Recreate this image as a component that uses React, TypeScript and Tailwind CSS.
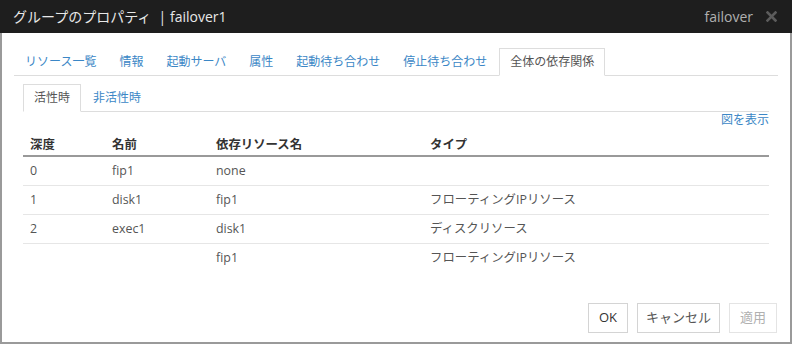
import React from 'react';

const mainTabs = ['リソース一覧', '情報', '起動サーバ', '属性', '起動待ち合わせ', '停止待ち合わせ', '全体の依存関係'];
const subTabs = ['活性時', '非活性時'];

const rows = [
  { depth: '0', name: 'fip1', dep: 'none', type: '' },
  { depth: '1', name: 'disk1', dep: 'fip1', type: 'フローティングIPリソース' },
  { depth: '2', name: 'exec1', dep: 'disk1', type: 'ディスクリソース' },
  { depth: '', name: '', dep: 'fip1', type: 'フローティングIPリソース' },
];

function Tabs({ items, active }: { items: string[]; active: number }) {
  return (
    <div className="flex border-b border-[#dddddd]">
      {items.map((t, i) => (
        <div
          key={t}
          className={
            i === active
              ? '-mb-px mr-px h-[28px] px-[10px] border border-[#dddddd] border-b-white bg-white text-[#555] leading-[26px] whitespace-nowrap'
              : '-mb-px mr-px h-[28px] px-[10px] border border-transparent text-[#3b87c6] leading-[26px] whitespace-nowrap'
          }
        >
          {t}
        </div>
      ))}
    </div>
  );
}

export default function App() {
  return (
    <div
      className="w-[792px] h-[344px] flex flex-col bg-white text-[12px]"
      style={{ fontFamily: '"Open Sans", "Noto Sans CJK JP", sans-serif' }}
    >
      {/* title bar */}
      <div className="h-[33px] shrink-0 bg-[#1e1e1e] flex items-center justify-between pl-[13px] pr-[15px]">
        <span className="text-[14px] text-[#e8e8e8] whitespace-pre">グループのプロパティ  | failover1</span>
        <div className="flex items-center gap-[13px]">
          <span className="text-[14px] text-[#b0b0b0]">failover</span>
          <svg width="11" height="11" viewBox="0 0 11 11">
            <path d="M1.5 1.5 L9.5 9.5 M9.5 1.5 L1.5 9.5" stroke="#5c5c5c" strokeWidth="2.6" strokeLinecap="square" />
          </svg>
        </div>
      </div>

      <div className="flex-1 flex flex-col border-x-2 border-b-2 border-[#9a9a9a] px-[12px] pt-[15px] pb-[9px]">
        <Tabs items={mainTabs} active={6} />

        <div className="px-[9px] pt-[8px]">
          <Tabs items={subTabs} active={0} />

          <div className="flex justify-end h-[16px] leading-[16px] text-[#3b87c6]">
            <span>図を表示</span>
          </div>

          {/* dependency table */}
          <div className="text-[12.4px]">
            <div className="flex border-b-2 border-[#999] text-[#333] font-bold leading-[18px] pt-[8px] pb-[1px]">
              <div className="w-[81px] pl-[7px]">深度</div>
              <div className="w-[104px] pl-[8px]">名前</div>
              <div className="w-[214px] pl-[8px]">依存リソース名</div>
              <div className="flex-1 pl-[8px]">タイプ</div>
            </div>
            {rows.map((r, i) => (
              <div
                key={i}
                className={
                  i < rows.length - 1
                    ? 'flex items-center h-[29px] border-b border-[#e6e6e6] text-[#555]'
                    : 'flex items-center h-[29px] text-[#555]'
                }
              >
                <div className="w-[81px] pl-[7px]">{r.depth}</div>
                <div className="w-[104px] pl-[8px]">{r.name}</div>
                <div className="w-[214px] pl-[8px]">{r.dep}</div>
                <div className="flex-1 pl-[8px]">{r.type}</div>
              </div>
            ))}
          </div>
        </div>

        <div className="mt-auto flex justify-end gap-[9px] pr-[1px]">
          <button className="w-[40px] h-[30px] border border-[#d4d4d4] text-[#333] text-[13px]">OK</button>
          <button className="w-[83px] h-[30px] border border-[#d4d4d4] text-[#555] text-[13px]">キャンセル</button>
          <button className="w-[48px] h-[30px] border border-[#e4e4e4] text-[#b0b0b0] text-[13px]">適用</button>
        </div>
      </div>
    </div>
  );
}
